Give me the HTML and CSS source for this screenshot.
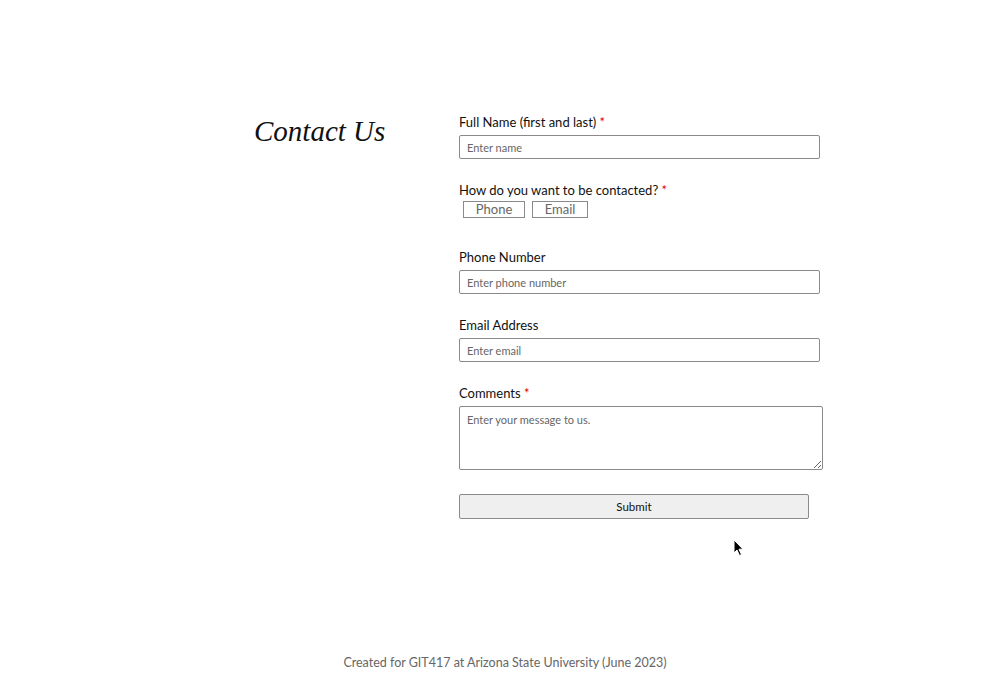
FILE: index.html
```html
<!DOCTYPE html>
<html lang="en">
<head>
<meta charset="utf-8">
<title>Contact Us</title>
<link rel="stylesheet" href="styles.css">
</head>
<body>
<main class="page">
  <div class="side">
    <h1 class="title">Contact Us</h1>
  </div>
  <form class="form">
    <div class="group">
      <label class="label" for="name">Full Name (first and last) <span class="req">*</span></label>
      <input class="field" id="name" type="text" placeholder="Enter name">
    </div>
    <div class="group">
      <div class="label">How do you want to be contacted? <span class="req">*</span></div>
      <div class="choices">
        <span class="choice choice-phone">Phone</span>
        <span class="choice choice-email">Email</span>
      </div>
    </div>
    <div class="group group-phone">
      <label class="label" for="phone">Phone Number</label>
      <input class="field" id="phone" type="text" placeholder="Enter phone number">
    </div>
    <div class="group">
      <label class="label" for="email">Email Address</label>
      <input class="field" id="email" type="text" placeholder="Enter email">
    </div>
    <div class="group">
      <label class="label" for="msg">Comments <span class="req">*</span></label>
      <textarea class="area" id="msg" placeholder="Enter your message to us."></textarea>
    </div>
    <button class="submit" type="button">Submit</button>
  </form>
</main>
<footer class="footer">Created for GIT417 at Arizona State University (June 2023)</footer>
<svg class="cursor" width="12" height="18" viewBox="0 0 12 18"><path d="M1 1 L1 14 L4 11 L6.5 16.5 L8.5 15.6 L6 10.2 L10 10.2 Z" fill="#000" stroke="#fff" stroke-width="1"/></svg>
</body>
</html>
```

FILE: styles.css
```css
html, body {
  margin: 0;
  padding: 0;
  background: #fff;
}
body {
  width: 1000px;
  height: 677px;
  position: relative;
  display: flex;
  flex-direction: column;
  font-family: "Lato", "Inter", sans-serif;
  color: #111;
  overflow: hidden;
}
.page {
  display: flex;
  padding: 114px 0 0 254px;
}
.side {
  width: 205px;
}
.title {
  margin: -3px 0 0;
  font-family: "Liberation Serif", serif;
  font-style: italic;
  font-weight: normal;
  font-size: 29px;
  line-height: 40px;
  color: #111;
}
.form {
  display: flex;
  flex-direction: column;
  width: 370px;
}
.group {
  display: flex;
  flex-direction: column;
  margin-bottom: 23px;
}
.label {
  font-size: 13px;
  line-height: 16px;
  margin-bottom: 5px;
  color: #111;
}
.req {
  color: #e00000;
}
.field {
  box-sizing: border-box;
  width: 361px;
  height: 24px;
  border: 1px solid #8a8a8a;
  border-radius: 2px;
  padding: 0 7px;
  font-family: inherit;
  font-size: 11px;
  color: #333;
  outline: none;
}
.field::placeholder, .area::placeholder {
  color: #666;
}
.choices {
  display: flex;
  gap: 7px;
  padding-left: 4px;
  margin-top: -2px;
}
.choice {
  box-sizing: border-box;
  height: 17px;
  border: 1px solid #8a8a8a;
  font-size: 13px;
  line-height: 15px;
  color: #666;
  text-align: center;
}
.choice-phone { width: 62px; }
.choice-email { width: 56px; }
.group-phone {
  margin-top: 8px;
}
.area {
  box-sizing: border-box;
  width: 364px;
  height: 64px;
  border: 1px solid #8a8a8a;
  border-radius: 2px;
  padding: 6px 7px;
  font-family: inherit;
  font-size: 11px;
  resize: vertical;
  outline: none;
}
.submit {
  box-sizing: border-box;
  width: 350px;
  height: 25px;
  margin-top: 1px;
  border: 1px solid #8a8a8a;
  border-radius: 2px;
  background: #efefef;
  font-family: inherit;
  font-size: 11.5px;
  color: #111;
}
.footer {
  margin-top: auto;
  margin-bottom: 6px;
  padding-left: 10px;
  text-align: center;
  font-size: 12.5px;
  line-height: 16px;
  color: #666;
}
.cursor {
  position: absolute;
  left: 733px;
  top: 539px;
}
```
